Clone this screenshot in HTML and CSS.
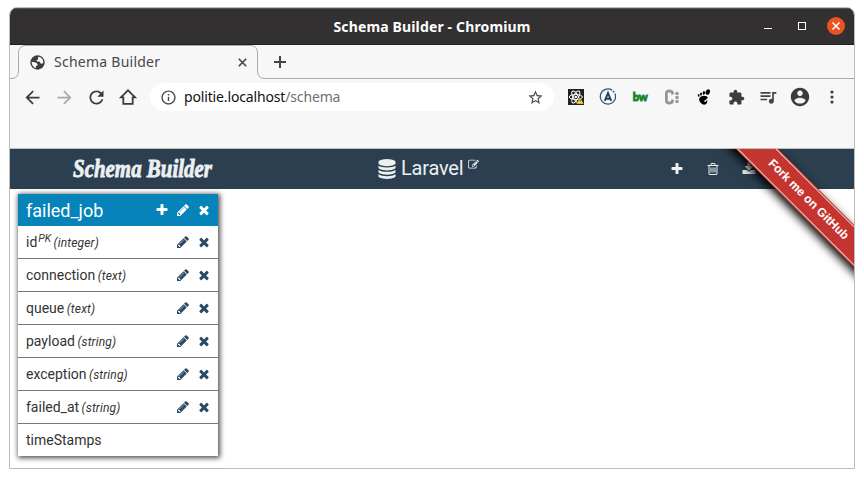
FILE: index.html
```
<!DOCTYPE html>
<html lang="en">
<head>
<meta charset="utf-8">
<title>Schema Builder</title>
<link rel="stylesheet" href="styles.css">
</head>
<body>
<svg class="defs" width="0" height="0">
  <symbol id="plus" viewBox="0 0 1792 1792"><path d="M1600 736v192q0 40-28 68t-68 28h-416v416q0 40-28 68t-68 28h-192q-40 0-68-28t-28-68v-416h-416q-40 0-68-28t-28-68v-192q0-40 28-68t68-28h416v-416q0-40 28-68t68-28h192q40 0 68 28t28 68v416h416q40 0 68 28t28 68z"/></symbol>
  <symbol id="pencil" viewBox="0 0 1792 1792"><path d="M491 1536l91-91-235-235-91 91v107h128v128h107zm523-928q0-22-22-22-10 0-17 7l-542 542q-7 7-7 17 0 22 22 22 10 0 17-7l542-542q7-7 7-17zm-54-192l416 416-832 832h-416v-416zm683 96q0 53-37 90l-166 166-416-416 166-165q36-38 90-38 53 0 91 38l235 234q37 39 37 91z"/></symbol>
  <symbol id="times" viewBox="0 0 1792 1792"><path d="M1490 1322q0 40-28 68l-136 136q-28 28-68 28t-68-28l-294-294-294 294q-28 28-68 28t-68-28l-136-136q-28-28-28-68t28-68l294-294-294-294q-28-28-28-68t28-68l136-136q28-28 68-28t68 28l294 294 294-294q28-28 68-28t68 28l136 136q28 28 28 68t-28 68l-294 294 294 294q28 28 28 68z"/></symbol>
</svg>
<div class="window">
  <div class="titlebar">
    <span class="window-title">Schema Builder - Chromium</span>
    <div class="window-buttons">
      <span class="minimize"></span>
      <span class="maximize"></span>
      <span class="close"><svg width="18" height="18" viewBox="0 0 18 18"><path d="M5.500 5.500l7 7M12.500 5.500l-7 7" stroke="#fff" stroke-width="1.500"/></svg></span>
    </div>
  </div>
  <div class="tabstrip">
    <svg class="tab-shape" width="844" height="34" viewBox="0 0 844 34"><path d="M0 33.500h1Q8.500 33.500 8.500 26V8Q8.500 .5 16 .5H240Q247.500 .5 247.500 8v18Q247.500 33.500 255 33.500H844" fill="none" stroke="#aaa"/></svg>
    <div class="tab">
      <svg class="globe" width="17" height="17" viewBox="0 0 17 17"><circle cx="8.500" cy="8.500" r="7.200" fill="#3c3c3c"/><path fill="#f7f7f7" d="M2.600 7.800L6.800 8.600 8.800 10.300 8.300 11.500 7 12 6.800 14.300Q2.800 12.700 2.600 7.800zM9.200 2.800Q12.500 3 14 6.200L14.300 9Q12.800 10.300 11.300 9.300L11 7.800 8.300 7.500 7.300 6.300 9 5.600z"/></svg>
      <span class="tab-title">Schema Builder</span>
      <svg class="tab-close" width="9" height="9" viewBox="0 0 9 9"><path d="M.8 .8l7.400 7.400M8.200 .8L.8 8.200" stroke="#444" stroke-width="1.600"/></svg>
    </div>
    <svg class="new-tab" width="12" height="12" viewBox="0 0 12 12"><path d="M6 0v12M0 6h12" stroke="#444" stroke-width="2"/></svg>
  </div>
  <div class="toolbar">
    <span class="slot"><svg width="21" height="21" viewBox="0 0 24 24"><path fill="#3c3c3c" d="M20 11H7.830l5.590-5.590L12 4l-8 8 8 8 1.410-1.410L7.830 13H20v-2z"/></svg></span>
    <span class="slot"><svg width="21" height="21" viewBox="0 0 24 24"><path fill="#a9a9a9" d="M12 4l-1.410 1.410L16.170 11H4v2h12.170l-5.580 5.590L12 20l8-8z"/></svg></span>
    <span class="slot"><svg width="21" height="21" viewBox="0 0 24 24"><path fill="#3c3c3c" d="M17.650 6.350C16.200 4.900 14.210 4 12 4c-4.420 0-7.990 3.580-7.990 8s3.570 8 7.990 8c3.730 0 6.840-2.550 7.730-6h-2.080c-.82 2.330-3.040 4-5.650 4-3.310 0-6-2.690-6-6s2.690-6 6-6c1.660 0 3.140.69 4.220 1.780L13 11h7V4l-2.350 2.350z"/></svg></span>
    <span class="slot"><svg width="18" height="18" viewBox="0 0 18 18"><path fill="none" stroke="#3c3c3c" stroke-width="1.800" d="M1.800 9.400h2.500v6.500h9.400V9.400h2.500L9 2.300z"/></svg></span>
    <div class="address">
      <svg class="info" width="17" height="17" viewBox="0 0 24 24"><path fill="#4a4a4a" d="M11 17h2v-6h-2v6zm1-15C6.480 2 2 6.480 2 12s4.480 10 10 10 10-4.480 10-10S17.520 2 12 2zm0 18c-4.410 0-8-3.590-8-8s3.590-8 8-8 8 3.590 8 8-3.590 8-8 8zM11 9h2V7h-2v2z"/></svg>
      <span class="url">politie.localhost<span class="path">/schema</span></span>
      <svg class="star" width="17" height="17" viewBox="0 0 24 24"><path fill="#4a4a4a" d="M22 9.240l-7.190-.62L12 2 9.190 8.630 2 9.240l5.460 4.730L5.820 21 12 17.270 18.180 21l-1.630-7.030L22 9.240zM12 15.400l-3.760 2.270 1-4.280-3.320-2.880 4.380-.38L12 6.100l1.710 4.040 4.380.38-3.320 2.880 1 4.280L12 15.400z"/></svg>
    </div>
    <span class="slot"><svg width="16" height="16" viewBox="0 0 16 16"><path fill="#202020" d="M0 0h16v16H0z"/><g fill="none" stroke="#fff" stroke-width="1"><ellipse cx="7.800" cy="8" rx="6.600" ry="2.500"/><ellipse cx="7.800" cy="8" rx="6.600" ry="2.500" transform="rotate(60 7.800 8)"/><ellipse cx="7.800" cy="8" rx="6.600" ry="2.500" transform="rotate(120 7.800 8)"/></g><circle cx="7.800" cy="8" r="1.300" fill="#fff"/><path fill="#ffe23a" stroke="#202020" stroke-width=".5" d="M12 8.300l4 6.700H8.200z"/><path d="M12.200 11v2" stroke="#555"/></svg></span>
    <span class="slot"><svg width="18" height="18" viewBox="0 0 18 18"><path fill="none" stroke="#30506c" stroke-width="1.200" d="M13.200 2.300A7.600 7.600 0 1 0 15.900 5.600"/><circle cx="14.500" cy="3.700" r=".9" fill="#30506c"/><path fill="none" stroke="#203f5c" stroke-width="1.900" d="M5.800 12.800L9 5l3.200 7.800M7.300 10.800h3.400"/></svg></span>
    <span class="slot bw">bw</span>
    <span class="slot"><svg width="16" height="16" viewBox="0 0 16 16"><path fill="none" stroke="#969696" stroke-width="2.800" d="M8.500 5.500V4.300Q8.500 2 5.300 2T2.400 4.300v7.400Q2.400 14 5.300 14t3.200-2.300v-1.200"/><g fill="#999"><circle cx="13" cy="4.500" r="1.800"/><circle cx="13" cy="8.500" r="1.800"/><circle cx="13" cy="12.500" r="1.800"/></g></svg></span>
    <span class="slot"><svg width="16" height="16" viewBox="0 0 16 16"><ellipse cx="11.800" cy="3.100" rx="2.100" ry="2.800" transform="rotate(25 11.800 3.100)"/><ellipse cx="7.900" cy="3.900" rx="1.200" ry="1.800" transform="rotate(15 7.900 3.900)"/><ellipse cx="5" cy="5" rx="1" ry="1.500"/><ellipse cx="2.700" cy="6.400" rx=".9" ry="1.300" transform="rotate(-15 2.700 6.400)"/><path d="M10.600 7.200Q6 5.800 3.800 8.500 2 11 4.600 13.800q2.600 2.700 5.200 1.500 2.100-1.300 1.300-4.200-2.200 3.300-3 1.200 0-1 2-1.900 3-1.700.5-3.200z"/></svg></span>
    <span class="slot"><svg width="17" height="17" viewBox="0 0 24 24"><path fill="#3c3c3c" d="M20.500 11H19V7c0-1.100-.9-2-2-2h-4V3.500C13 2.120 11.880 1 10.500 1S8 2.120 8 3.500V5H4c-1.100 0-1.990.9-1.990 2v3.800H3.500c1.490 0 2.700 1.210 2.700 2.700s-1.210 2.700-2.700 2.700H2V20c0 1.100.9 2 2 2h3.800v-1.500c0-1.490 1.210-2.700 2.700-2.700 1.490 0 2.700 1.210 2.700 2.700V22H17c1.100 0 2-.9 2-2v-4h1.500c1.380 0 2.500-1.120 2.500-2.500S21.880 11 20.500 11z"/></svg></span>
    <span class="slot"><svg width="20" height="20" viewBox="0 0 24 24"><path fill="#444" d="M15 6H3v2h12V6zm0 4H3v2h12v-2zM3 16h8v-2H3v2zM17 6v8.180c-.31-.11-.65-.18-1-.18-1.660 0-3 1.340-3 3s1.340 3 3 3 3-1.340 3-3V8h3V6h-5z"/></svg></span>
    <span class="slot"><svg width="22" height="22" viewBox="0 0 24 24"><path fill="#3c3c3c" d="M12 2C6.480 2 2 6.480 2 12s4.480 10 10 10 10-4.480 10-10S17.520 2 12 2zm0 3c1.660 0 3 1.340 3 3s-1.340 3-3 3-3-1.340-3-3 1.340-3 3-3zm0 14.200c-2.500 0-4.710-1.280-6-3.220.03-1.990 4-3.080 6-3.080 1.990 0 5.970 1.090 6 3.080-1.290 1.940-3.500 3.220-6 3.220z"/></svg></span>
    <span class="slot"><svg width="4" height="14" viewBox="0 0 4 14"><g fill="#3c3c3c"><circle cx="2" cy="2" r="1.600"/><circle cx="2" cy="7" r="1.600"/><circle cx="2" cy="12" r="1.600"/></g></svg></span>
  </div>
  <div class="page">
    <header class="app-header">
      <svg class="logo" width="160" height="40"><text x="2" y="27.500" textLength="139" lengthAdjust="spacingAndGlyphs">Schema Builder</text></svg>
      <div class="project">
        <svg width="20" height="20" viewBox="0 0 1792 1792"><path d="M896 768q237 0 443-43t325-127v170q0 69-103 128t-280 93.500-385 34.500-385-34.500-280-93.500-103-128v-170q119 84 325 127t443 43zm0 768q237 0 443-43t325-127v170q0 69-103 128t-280 93.500-385 34.500-385-34.500-280-93.500-103-128v-170q119 84 325 127t443 43zm0-384q237 0 443-43t325-127v170q0 69-103 128t-280 93.500-385 34.500-385-34.500-280-93.500-103-128v-170q119 84 325 127t443 43zm0-1152q208 0 385 34.500t280 93.500 103 128v128q0 69-103 128t-280 93.500-385 34.500-385-34.500-280-93.500-103-128v-128q0-69 103-128t280-93.500 385-34.500z"/></svg>
        <span class="project-name">Laravel</span>
        <svg class="edit" width="11" height="11" viewBox="0 0 1792 1792"><path d="M888 1184l116-116-152-152-116 116v56h96v96h56zm440-720q-16-16-33 1l-350 350q-17 17-1 33t33-1l350-350q17-17 1-33zm80 594v190q0 119-84.500 203.500t-203.500 84.500h-832q-119 0-203.500-84.500t-84.500-203.500v-832q0-119 84.500-203.500t203.500-84.500h832q63 0 117 25 15 7 18 23 3 17-9 29l-49 49q-14 14-32 8-23-6-45-6h-832q-66 0-113 47t-47 113v832q0 66 47 113t113 47h832q66 0 113-47t47-113v-126q0-13 9-22l64-64q15-15 35-7t20 29zm-96-738l288 288-672 672h-288v-288zm444 132l-92 92-288-288 92-92q28-28 68-28t68 28l152 152q28 28 28 68t-28 68z"/></svg>
      </div>
      <div class="actions">
        <svg width="14" height="14"><use href="#plus"/></svg>
        <svg width="14" height="14" viewBox="0 0 1792 1792"><path d="M704 736v576q0 14-9 23t-23 9h-64q-14 0-23-9t-9-23v-576q0-14 9-23t23-9h64q14 0 23 9t9 23zm256 0v576q0 14-9 23t-23 9h-64q-14 0-23-9t-9-23v-576q0-14 9-23t23-9h64q14 0 23 9t9 23zm256 0v576q0 14-9 23t-23 9h-64q-14 0-23-9t-9-23v-576q0-14 9-23t23-9h64q14 0 23 9t9 23zm128 724v-948h-896v948q0 22 7 40.500t14.500 27 10.500 8.500h832q3 0 10.500-8.500t14.500-27 7-40.500zm-672-1076h448l-48-117q-7-9-17-11h-317q-10 2-17 11zm928 32v64q0 14-9 23t-23 9h-96v948q0 83-47 143.500t-113 60.500h-832q-66 0-113-58.500t-47-141.500v-952h-96q-14 0-23-9t-9-23v-64q0-14 9-23t23-9h309l70-167q15-37 54-63t79-26h320q40 0 79 26t54 63l70 167h309q14 0 23 9t9 23z"/></svg>
        <svg width="14" height="14" viewBox="0 0 1792 1792"><path d="M1344 1344q0-26-19-45t-45-19-45 19-19 45 19 45 45 19 45-19 19-45zm256 0q0-26-19-45t-45-19-45 19-19 45 19 45 45 19 45-19 19-45zm128-224v320q0 40-28 68t-68 28h-1472q-40 0-68-28t-28-68v-320q0-40 28-68t68-28h465l135 136q58 56 136 56t136-56l136-136h464q40 0 68 28t28 68zm-325-569q17 41-14 70l-448 448q-18 19-45 19t-45-19l-448-448q-31-29-14-70 17-39 59-39h256v-448q0-26 19-45t45-19h256q26 0 45 19t19 45v448h256q42 0 59 39z"/></svg>
      </div>
    </header>
    <div class="table-card">
      <div class="table-head"><span class="name">failed_job</span><svg><use href="#plus"/></svg><svg><use href="#pencil"/></svg><svg><use href="#times"/></svg></div>
      <div class="row"><span class="name">id<sup>PK</sup> <i>(integer)</i></span><svg><use href="#pencil"/></svg><svg><use href="#times"/></svg></div>
      <div class="row"><span class="name">connection <i>(text)</i></span><svg><use href="#pencil"/></svg><svg><use href="#times"/></svg></div>
      <div class="row"><span class="name">queue <i>(text)</i></span><svg><use href="#pencil"/></svg><svg><use href="#times"/></svg></div>
      <div class="row"><span class="name">payload <i>(string)</i></span><svg><use href="#pencil"/></svg><svg><use href="#times"/></svg></div>
      <div class="row"><span class="name">exception <i>(string)</i></span><svg><use href="#pencil"/></svg><svg><use href="#times"/></svg></div>
      <div class="row"><span class="name">failed_at <i>(string)</i></span><svg><use href="#pencil"/></svg><svg><use href="#times"/></svg></div>
      <div class="row"><span class="name">timeStamps</span></div>
    </div>
    <div class="ribbon"><span>Fork me on GitHub</span></div>
  </div>
</div>
</body>
</html>
```
FILE: styles.css
```
* { box-sizing: border-box; }
body { margin: 0; background: #fff; overflow: hidden; font-family: Roboto, sans-serif; }
svg { display: block; flex: none; }
.defs { position: absolute; }
.window {
  width: 846px; height: 462px; margin: 7px 0 0 9px;
  border: 1px solid #bcbcbc; border-radius: 8px 8px 0 0;
  overflow: hidden; background: #fff;
}
.titlebar {
  position: relative; height: 37px; background: #333031;
  border-top: 1px solid #555; border-bottom: 1px solid #211f20;
  display: flex; align-items: center; justify-content: center;
}
.window-title {
  font: bold 14px/20px "Noto Sans", sans-serif; color: #fff;
  letter-spacing: .15px; white-space: nowrap;
}
.window-buttons {
  position: absolute; right: 9px; top: 8px; height: 18px;
  display: flex; align-items: center;
}
.minimize { width: 8px; height: 1px; background: #fff; margin: 5px 26px 0 0; }
.maximize { width: 8px; height: 8px; border: 1px solid #fff; margin-right: 21px; }
.close { width: 18px; height: 18px; border-radius: 50%; background: #e95420; }
.tabstrip { position: relative; height: 34px; background: #f7f7f7; display: flex; align-items: center; }
.tab-shape { position: absolute; left: 0; top: 0; }
.tab { width: 248px; padding-left: 19px; display: flex; align-items: center; }
.tab-title { margin-left: 8px; width: 184px; font: 14px/20px "Noto Sans", sans-serif; color: #474747; letter-spacing: .25px; }
.new-tab { margin-left: 16px; }
.toolbar {
  height: 70px; padding: 4px 0 0 6px; background: #f7f7f7;
  border-bottom: 1px solid #c0c0bc; display: flex;
}
.slot { width: 32px; height: 28px; flex: none; display: flex; align-items: center; justify-content: center; }
.bw { font: 900 11px/24px Lato, sans-serif; color: #10822b; letter-spacing: -.4px; -webkit-text-stroke: .8px #10822b; }
.address {
  width: 404px; height: 28px; margin: 0 6px; padding: 0 10px;
  border-radius: 14px; background: #fff; display: flex; align-items: center;
}
.url { margin-left: 7px; flex: 1; font: 14px/20px "Noto Sans", sans-serif; color: #111; letter-spacing: -.15px; }
.path { color: #707070; }
.page { position: relative; height: 319px; overflow: hidden; }
.app-header { height: 40px; background: #2b3f50; color: #ecf0f1; fill: #ecf0f1; display: flex; align-items: center; }
.logo { margin-left: 61px; overflow: visible; font: italic bold 26px "Liberation Serif", serif; stroke: #ecf0f1; stroke-width: .9px; }
.project { margin-left: 146px; display: flex; align-items: center; width: 283px; }
.project-name { margin-left: 4px; font-size: 20px; line-height: 24px; letter-spacing: -.2px; padding-bottom: 2px; }
.edit { margin: -9px 0 0 5px; }
.actions { margin-left: 10px; display: flex; gap: 22px; }
.table-card {
  width: 200px; margin: 5px 0 0 8px; background: #fff;
  box-shadow: 1px 1px 5px 1px rgba(0, 0, 0, .7);
}
.table-head, .row { display: flex; align-items: center; padding: 0 7px 0 8px; }
.table-head svg, .row svg { width: 14px; height: 14px; margin-left: 7px; }
.table-head { height: 32px; background: #0684b9; color: #fff; fill: #fff; font-size: 18px; }
.row { height: 33px; border-bottom: 1px solid #777; color: #333; fill: #2c4a63; font-size: 14px; }
.row:last-child { height: 32px; border-bottom: 0; }
.name { flex: 1; white-space: nowrap; }
.row i { font-size: 12px; margin-left: -1px; letter-spacing: .15px; }
.row sup { font-size: 10.5px; font-style: italic; line-height: 0; vertical-align: 5px; margin-left: 1px; }
.ribbon {
  position: absolute; left: 688px; top: 35.5px; width: 220px; height: 30px;
  background: #c5352f; transform: rotate(45deg); padding: 1px 0;
  box-shadow: 3px 4px 10px #000;
}
.ribbon span {
  display: block; height: 28px; border: 1px solid #f1d1cf; border-width: 1px 0;
  font: bold 12px/25px "Liberation Sans", sans-serif; color: #fff; text-align: center;
}
```
